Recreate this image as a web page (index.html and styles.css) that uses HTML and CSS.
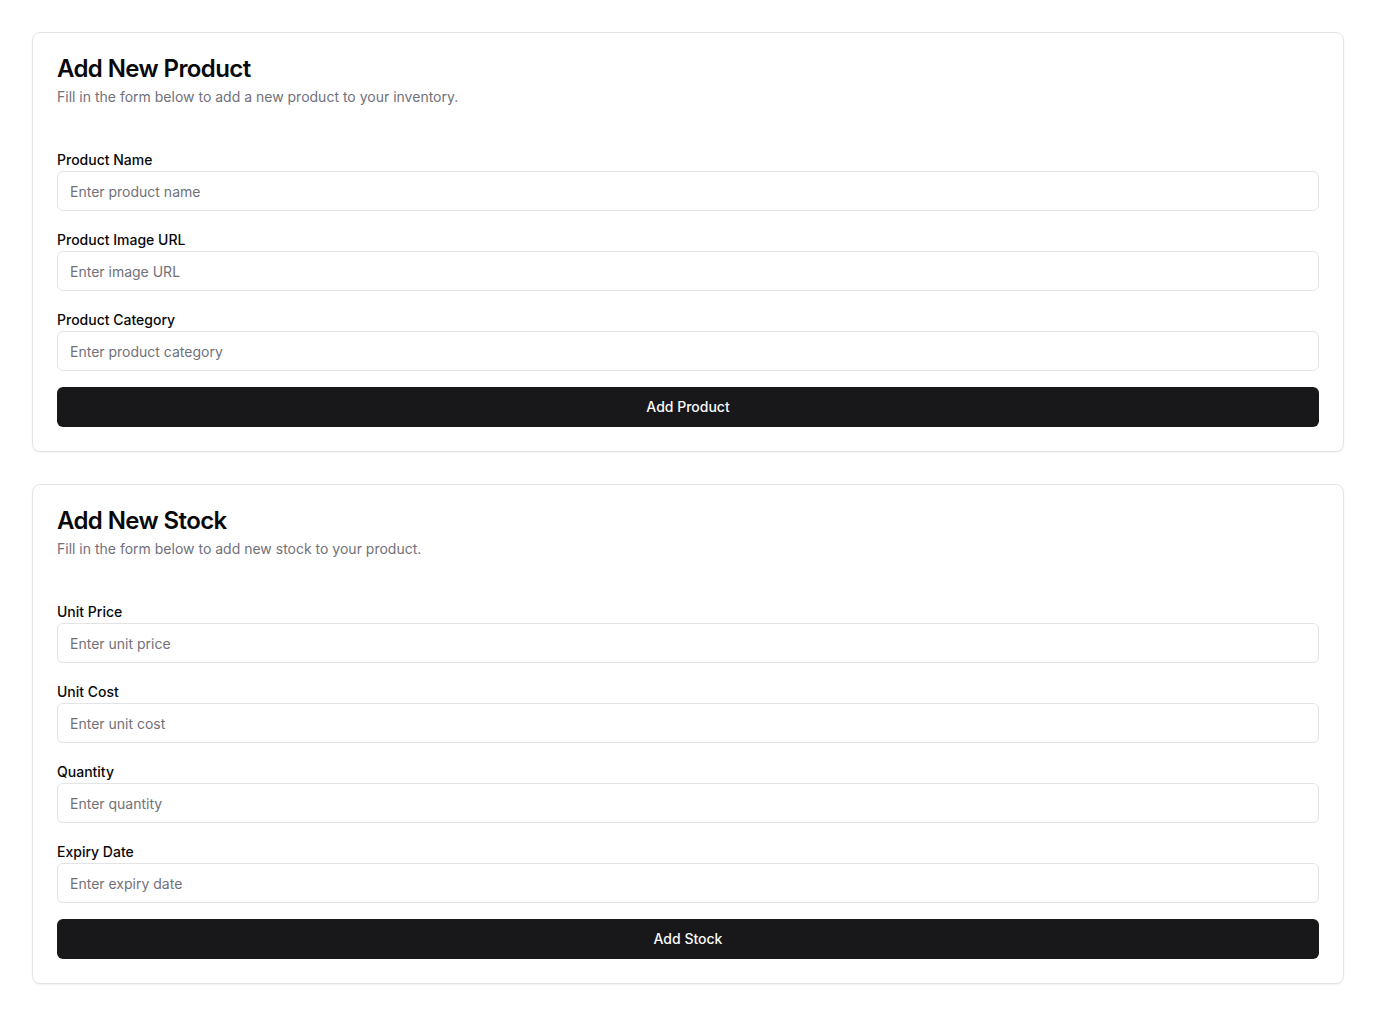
FILE: index.html
```html
<!DOCTYPE html>
<html lang="en">
<head>
<meta charset="utf-8">
<title>Inventory</title>
<link rel="stylesheet" href="styles.css">
</head>
<body>
<main class="page">
  <section class="card">
    <header class="card-header">
      <h2 class="card-title">Add New Product</h2>
      <p class="card-desc">Fill in the form below to add a new product to your inventory.</p>
    </header>
    <form class="card-content">
      <div class="field">
        <label class="label">Product Name</label>
        <input class="input" type="text" placeholder="Enter product name">
      </div>
      <div class="field">
        <label class="label">Product Image URL</label>
        <input class="input" type="text" placeholder="Enter image URL">
      </div>
      <div class="field">
        <label class="label">Product Category</label>
        <input class="input" type="text" placeholder="Enter product category">
      </div>
      <button class="button" type="button">Add Product</button>
    </form>
  </section>

  <section class="card">
    <header class="card-header">
      <h2 class="card-title">Add New Stock</h2>
      <p class="card-desc">Fill in the form below to add new stock to your product.</p>
    </header>
    <form class="card-content">
      <div class="field">
        <label class="label">Unit Price</label>
        <input class="input" type="text" placeholder="Enter unit price">
      </div>
      <div class="field">
        <label class="label">Unit Cost</label>
        <input class="input" type="text" placeholder="Enter unit cost">
      </div>
      <div class="field">
        <label class="label">Quantity</label>
        <input class="input" type="text" placeholder="Enter quantity">
      </div>
      <div class="field">
        <label class="label">Expiry Date</label>
        <input class="input" type="text" placeholder="Enter expiry date">
      </div>
      <button class="button" type="button">Add Stock</button>
    </form>
  </section>
</main>
</body>
</html>
```
FILE: styles.css
```css
* { box-sizing: border-box; }
html, body {
  margin: 0;
  padding: 0;
  background: #ffffff;
}
body {
  font-family: Inter, "Noto Sans", "Liberation Sans", sans-serif;
  color: #09090b;
  -webkit-font-smoothing: antialiased;
}
.page {
  padding: 32px;
  display: flex;
  flex-direction: column;
  gap: 32px;
}
.card {
  border: 1px solid #e4e4e7;
  border-radius: 8px;
  background: #ffffff;
  box-shadow: 0 1px 2px rgba(0, 0, 0, 0.05);
}
.card-header {
  padding: 24px;
  display: flex;
  flex-direction: column;
  gap: 6px;
}
.card-title {
  margin: 0;
  font-size: 24px;
  line-height: 24px;
  font-weight: 600;
  letter-spacing: -0.6px;
  color: #09090b;
}
.card-desc {
  margin: 0;
  font-size: 14px;
  line-height: 20px;
  color: #71717a;
}
.card-content {
  padding: 16px 24px 24px;
  display: flex;
  flex-direction: column;
  gap: 16px;
  margin: 0;
}
.field {
  display: flex;
  flex-direction: column;
  padding-top: 3px;
}
.label {
  font-size: 14px;
  line-height: 20px;
  font-weight: 500;
  color: #09090b;
  margin-bottom: 1px;
}
.input {
  height: 40px;
  width: 100%;
  border: 1px solid #e4e4e7;
  border-radius: 6px;
  background: #ffffff;
  padding: 8px 12px;
  font-family: inherit;
  font-size: 14px;
  color: #09090b;
  outline: none;
}
.input::placeholder {
  color: #71717a;
}
.button {
  height: 40px;
  width: 100%;
  border: none;
  border-radius: 6px;
  background: #18181b;
  color: #fafafa;
  font-family: inherit;
  font-size: 14px;
  font-weight: 500;
  padding: 0 16px 1px;
  cursor: pointer;
}
```
